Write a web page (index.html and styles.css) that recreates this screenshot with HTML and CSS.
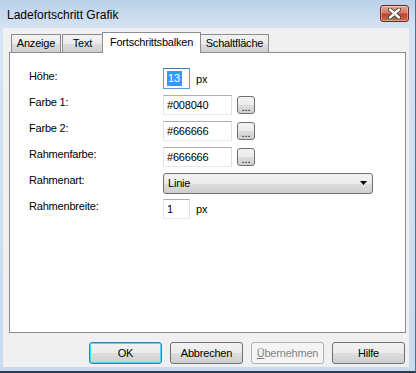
FILE: index.html
```html
<!DOCTYPE html>
<html>
<head>
    <meta charset="utf-8" />
    <title>Ladefortschritt Grafik</title>
    <link rel="stylesheet" href="styles.css">
</head>
<body>
    <div class="window">
        <div class="titlebar">
            <span class="title">Ladefortschritt Grafik</span>
            <button class="close">
                <svg width="13" height="11" viewBox="0 0 13 11">
                    <path d="M2 1.5 L11 9.5 M11 1.5 L2 9.5" stroke="#3a3a3a" stroke-width="4.2" stroke-linecap="round" />
                    <path d="M2 1.5 L11 9.5 M11 1.5 L2 9.5" stroke="#fff" stroke-width="2.4" stroke-linecap="round" />
                </svg>
            </button>
        </div>
        <div class="client">
            <div class="tabs">
                <div class="tab tab-anzeige">Anzeige</div>
                <div class="tab tab-text">Text</div>
                <div class="tab tab-active">Fortschrittsbalken</div>
                <div class="tab tab-schalt">Schaltfläche</div>
            </div>
            <div class="panel">
                <div class="form">
                    <label>Höhe:</label>
                    <div class="ctrl">
                        <div class="field small focused"><span class="sel">13</span><span class="caret"></span></div>
                        <span class="unit">px</span>
                    </div>

                    <label>Farbe 1:</label>
                    <div class="ctrl">
                        <div class="field color">#008040</div>
                        <button class="dots">...</button>
                    </div>

                    <label>Farbe 2:</label>
                    <div class="ctrl">
                        <div class="field color">#666666</div>
                        <button class="dots">...</button>
                    </div>

                    <label>Rahmenfarbe:</label>
                    <div class="ctrl">
                        <div class="field color">#666666</div>
                        <button class="dots">...</button>
                    </div>

                    <label>Rahmenart:</label>
                    <div class="ctrl">
                        <div class="combo">
                            <span>Linie</span>
                            <svg width="7" height="4" viewBox="0 0 7 4"><path d="M0 0 H7 L3.5 4 Z" fill="#000" /></svg>
                        </div>
                    </div>

                    <label>Rahmenbreite:</label>
                    <div class="ctrl">
                        <div class="field small">1</div>
                        <span class="unit">px</span>
                    </div>
                </div>
            </div>
            <div class="buttons">
                <button class="btn default">OK</button>
                <button class="btn">Abbrechen</button>
                <button class="btn" disabled><u>Ü</u>bernehmen</button>
                <button class="btn">Hilfe</button>
            </div>
        </div>
    </div>
</body>
</html>
```

FILE: styles.css
```css
body {
    margin: 0;
    background: #fff;
    font-family: "Liberation Sans", Arial, sans-serif;
    font-size: 11px;
    letter-spacing: -0.2px;
    color: #000;
}
.window {
    width: 416px;
    height: 373px;
    box-sizing: border-box;
    display: flex;
    flex-direction: column;
    background: linear-gradient(to bottom, #bad0ea 0px, #d6e3f3 28px, #c9daef 100%);
    border-right: 1px solid #4f6f93;
    border-bottom: 2px solid #2d3e52;
}
.titlebar {
    height: 28px;
    display: flex;
    align-items: center;
    justify-content: space-between;
    padding: 0 6px 0 7px;
}
.title {
    font-size: 12px;
    letter-spacing: 0;
    margin-top: 1px;
}
.close {
    width: 29px;
    height: 17px;
    margin-top: -2px;
    padding: 0;
    display: flex;
    align-items: center;
    justify-content: center;
    border: 1px solid #6e2a22;
    border-radius: 3px;
    background: linear-gradient(to bottom, #e3a896 0%, #d27a67 45%, #c0432c 55%, #cf6a4f 100%);
    box-shadow: inset 0 0 0 1px rgba(255, 255, 255, 0.35);
}
.client {
    flex: 1;
    margin: 0 6px 4px 3px;
    padding: 4px 3px 0 6px;
    background: #f0f0f0;
    display: flex;
    flex-direction: column;
}
.tabs {
    height: 20px;
    display: flex;
    align-items: flex-end;
}
.tab {
    box-sizing: border-box;
    height: 18px;
    border: 1px solid #898c95;
    border-bottom: none;
    background: linear-gradient(to bottom, #f2f2f2 0%, #ebebeb 50%, #dddddd 51%, #cfcfcf 100%);
    text-align: center;
    line-height: 17px;
}
.tab-anzeige {
    width: 50px;
    margin-left: 2px;
}
.tab-text {
    width: 41px;
    margin-left: 1px;
}
.tab-active {
    width: 99px;
    height: 21px;
    margin-left: -1px;
    margin-bottom: -1px;
    background: #fff;
    position: relative;
    z-index: 1;
    line-height: 19px;
}
.tab-schalt {
    width: 69px;
    margin-left: -1px;
}
.panel {
    height: 281px;
    width: 397px;
    box-sizing: border-box;
    border: 1px solid #898c95;
    background: #fff;
    padding: 16px 0 0 19px;
}
.form {
    display: grid;
    grid-template-columns: 134px auto;
    grid-auto-rows: 20px;
    row-gap: 6px;
}
.form label {
    line-height: 14px;
}
.ctrl {
    display: flex;
    align-items: center;
}
.field {
    box-sizing: border-box;
    height: 20px;
    border: 1px solid #e3e9ef;
    border-top-color: #abadb3;
    border-left-color: #e2e3ea;
    border-right-color: #dbdfe6;
    background: #fff;
    padding: 0 3px;
    line-height: 18px;
    display: flex;
    align-items: center;
}
.field.small {
    width: 27px;
}
.field.color {
    width: 69px;
}
.field.focused {
    border-color: #569de5;
    border-top-color: #3d7bad;
    height: 21px;
    margin-top: -1px;
}
.sel {
    background: #3399ff;
    color: #fff;
    line-height: 15px;
    padding: 0 1px;
}
.caret {
    width: 1px;
    height: 15px;
    background: #e06b00;
}
.unit {
    margin-left: 6px;
}
.dots {
    width: 18px;
    height: 18px;
    margin-left: 5px;
    padding: 0;
    border: 1px solid #707070;
    border-radius: 3px;
    background: linear-gradient(to bottom, #f2f2f2 0%, #ebebeb 50%, #dddddd 51%, #cfcfcf 100%);
    font-family: "Liberation Sans", Arial, sans-serif;
    font-size: 11px;
    line-height: 20px;
    color: #000;
}
.combo {
    box-sizing: border-box;
    width: 210px;
    height: 21px;
    border: 1px solid #707070;
    border-radius: 3px;
    background: linear-gradient(to bottom, #f2f2f2 0%, #ebebeb 50%, #dddddd 51%, #cfcfcf 100%);
    display: flex;
    align-items: center;
    justify-content: space-between;
    padding: 0 5px 0 4px;
}
.buttons {
    display: flex;
    justify-content: flex-end;
    gap: 8px;
    margin-top: 9px;
    padding-right: 1px;
}
.btn {
    width: 73px;
    height: 22px;
    padding: 0;
    border: 1px solid #707070;
    border-radius: 3px;
    background: linear-gradient(to bottom, #f2f2f2 0%, #ebebeb 50%, #dddddd 51%, #cfcfcf 100%);
    font-family: "Liberation Sans", Arial, sans-serif;
    font-size: 11px;
    letter-spacing: -0.2px;
    color: #000;
}
.btn.default {
    border-color: #3c7fb1;
    box-shadow: inset 0 0 0 1px #48d8fb;
}
.btn:disabled {
    border-color: #adb2b5;
    background: #f4f4f4;
    color: #838383;
}
```
